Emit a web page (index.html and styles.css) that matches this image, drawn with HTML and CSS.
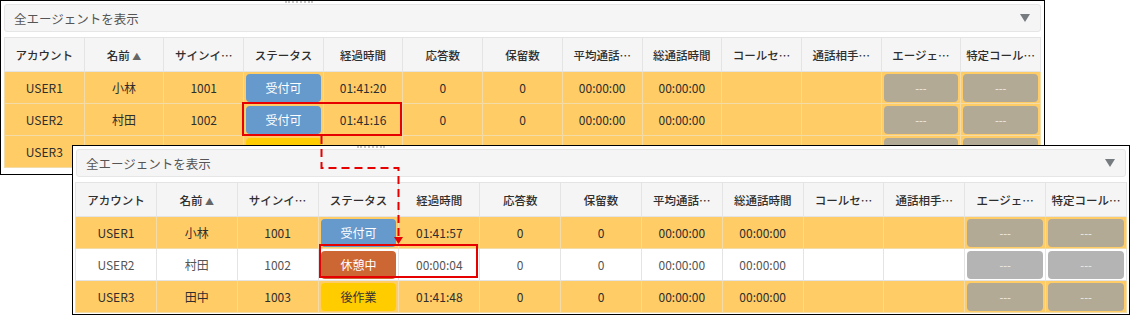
FILE: index.html
```html
<!DOCTYPE html>
<html lang="ja">
<head>
    <meta charset="UTF-8">
    <title>エージェント一覧</title>
    <link rel="stylesheet" href="styles.css">
</head>
<body>
    <div class="window window-top">
        <div class="grip"></div>
        <div class="panel-head">全エージェントを表示<span class="caret"></span></div>
        <table class="agents">
            <thead>
                <tr>
                    <th>アカウント</th><th>名前 <span class="sort">▲</span></th><th>サインイ…</th><th>ステータス</th><th>経過時間</th><th>応答数</th><th>保留数</th><th>平均通話…</th><th>総通話時間</th><th>コールセ…</th><th>通話相手…</th><th>エージェ…</th><th>特定コール…</th>
                </tr>
            </thead>
            <tbody>
                <tr class="busy">
                    <td>USER1</td><td>小林</td><td>1001</td><td class="btn-cell"><span class="st st-ok">受付可</span></td><td>01:41:20</td><td>0</td><td>0</td><td>00:00:00</td><td>00:00:00</td><td></td><td></td><td class="btn-cell"><span class="dash">---</span></td><td class="btn-cell"><span class="dash">---</span></td>
                </tr>
                <tr class="busy">
                    <td>USER2</td><td>村田</td><td>1002</td><td class="btn-cell"><span class="st st-ok">受付可</span></td><td>01:41:16</td><td>0</td><td>0</td><td>00:00:00</td><td>00:00:00</td><td></td><td></td><td class="btn-cell"><span class="dash">---</span></td><td class="btn-cell"><span class="dash">---</span></td>
                </tr>
                <tr class="busy">
                    <td>USER3</td><td>田中</td><td>1003</td><td class="btn-cell"><span class="st st-after">後作業</span></td><td>01:41:12</td><td>0</td><td>0</td><td>00:00:00</td><td>00:00:00</td><td></td><td></td><td class="btn-cell"><span class="dash">---</span></td><td class="btn-cell"><span class="dash">---</span></td>
                </tr>
            </tbody>
        </table>
    </div>

    <div class="window window-bottom">
        <div class="grip"></div>
        <div class="panel-head">全エージェントを表示<span class="caret"></span></div>
        <table class="agents">
            <thead>
                <tr>
                    <th>アカウント</th><th>名前 <span class="sort">▲</span></th><th>サインイ…</th><th>ステータス</th><th>経過時間</th><th>応答数</th><th>保留数</th><th>平均通話…</th><th>総通話時間</th><th>コールセ…</th><th>通話相手…</th><th>エージェ…</th><th>特定コール…</th>
                </tr>
            </thead>
            <tbody>
                <tr class="busy">
                    <td>USER1</td><td>小林</td><td>1001</td><td class="btn-cell"><span class="st st-ok">受付可</span></td><td>01:41:57</td><td>0</td><td>0</td><td>00:00:00</td><td>00:00:00</td><td></td><td></td><td class="btn-cell"><span class="dash">---</span></td><td class="btn-cell"><span class="dash">---</span></td>
                </tr>
                <tr class="idle">
                    <td>USER2</td><td>村田</td><td>1002</td><td class="btn-cell"><span class="st st-break">休憩中</span></td><td>00:00:04</td><td>0</td><td>0</td><td>00:00:00</td><td>00:00:00</td><td></td><td></td><td class="btn-cell"><span class="dash">---</span></td><td class="btn-cell"><span class="dash">---</span></td>
                </tr>
                <tr class="busy">
                    <td>USER3</td><td>田中</td><td>1003</td><td class="btn-cell"><span class="st st-after">後作業</span></td><td>01:41:48</td><td>0</td><td>0</td><td>00:00:00</td><td>00:00:00</td><td></td><td></td><td class="btn-cell"><span class="dash">---</span></td><td class="btn-cell"><span class="dash">---</span></td>
                </tr>
            </tbody>
        </table>
    </div>

    <!-- 注釈: 赤枠と矢印 -->
    <svg class="marks" width="1131" height="315" viewBox="0 0 1131 315">
        <rect x="243" y="103" width="158" height="32" fill="none" stroke="#e60000" stroke-width="2"/>
        <rect x="320" y="245" width="157" height="32" fill="none" stroke="#e60000" stroke-width="2"/>
        <path d="M321.5 136 V168 H398.5 V237" fill="none" stroke="#e60000" stroke-width="2" stroke-dasharray="8 5"/>
        <polygon points="394,237 403,237 398.5,244" fill="#e60000"/>
    </svg>
</body>
</html>
```

FILE: styles.css
```css
body { margin: 0; width: 1131px; height: 315px; position: relative; overflow: hidden; background-color: #fff; color: #333; font-family: "Noto Sans CJK JP", "Noto Sans", sans-serif; }

.window { position: relative; box-sizing: border-box; border: 1px solid #000; background-color: #fff; padding: 3px 3px 0 3px; }
.window-top { width: 1045px; height: 175px; }
.window-bottom { position: absolute; left: 72px; top: 145px; width: 1058px; height: 170px; padding: 3px 2px 0 2px; }
.grip { position: absolute; top: 0; left: 284px; width: 28px; border-top: 2px dotted #c4c4c4; }

.panel-head { height: 26px; line-height: 25px; padding: 0 10px 0 9px; background-color: #f5f5f5; border: 1px solid #e6e6e6; border-radius: 3px; font-size: 12.5px; color: #555; display: flex; justify-content: space-between; align-items: center; margin-bottom: 5px; }
.window-bottom .panel-head { margin-left: 1px; margin-right: 1px; }
.caret { width: 0; height: 0; border-left: 5px solid transparent; border-right: 5px solid transparent; border-top: 8px solid #767b80; }

.agents { width: 100%; table-layout: fixed; border-collapse: collapse; font-size: 12px; }
.agents th, .agents td { border: 1px solid #e4e4e4; text-align: center; padding: 0; white-space: nowrap; overflow: hidden; }
.agents th { height: 33px; background-color: #f5f5f5; font-size: 11.5px; font-weight: 500; color: #2e2e2e; }
.agents td { height: 31px; }
.sort { font-size: 9px; color: #666; }

.busy td { background-color: #ffcc66; border-color: #f3dca8; color: #2e2e2e; }
.idle td { background-color: #fff; color: #555; }

.st { display: block; height: 28px; line-height: 28px; margin: 0 2px; border-radius: 4px; color: #fff; font-size: 12px; }
.st-ok { background-color: #6699cc; }
.st-break { background-color: #cc6633; }
.st-after { background-color: #ffcc00; color: #333; }
.dash { display: block; height: 28px; line-height: 28px; margin: 0 2px; border-radius: 4px; background-color: #b3aa96; color: #f2efe8; font-size: 11px; }
.idle .dash { background-color: #b4b4b4; }

.marks { position: absolute; left: 0; top: 0; pointer-events: none; }
```
